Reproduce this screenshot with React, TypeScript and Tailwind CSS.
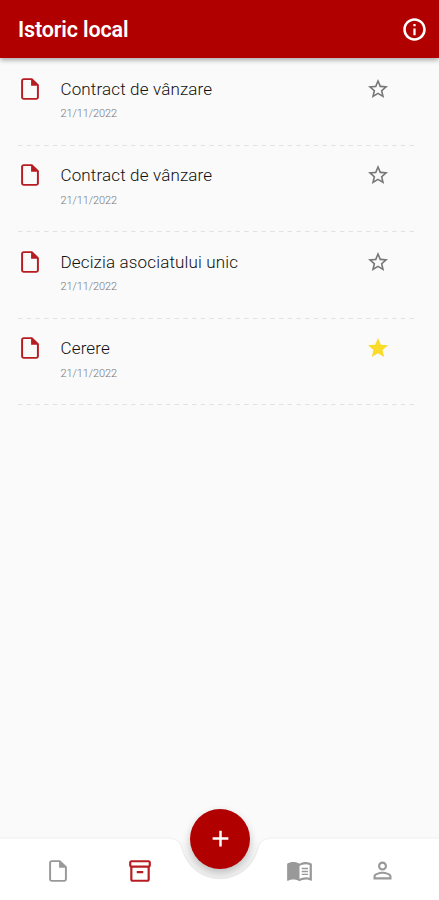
const paths = {
  info: "M11 7h2v2h-2zm0 4h2v6h-2zm1-9C6.48 2 2 6.48 2 12s4.48 10 10 10 10-4.48 10-10S17.52 2 12 2zm0 17.7c-4.25 0-7.7-3.45-7.7-7.7s3.45-7.7 7.7-7.7 7.7 3.45 7.7 7.7-3.45 7.7-7.7 7.7z",
  file: "M14 2H6.2C4.9 2 3.8 3.05 3.8 4.35V19.65C3.8 20.95 4.9 22 6.2 22H17.8C19.1 22 20.2 20.95 20.2 19.65V8L14 2zM6.2 20.2C5.85 20.2 5.6 19.95 5.6 19.6V4.4C5.6 4.05 5.85 3.8 6.2 3.8H13V9H18.4V19.6C18.4 19.95 18.15 20.2 17.8 20.2H6.2z",
  star: "M12 17.27 18.18 21l-1.64-7.03L22 9.24l-7.19-.61L12 2 9.19 8.63 2 9.24l5.46 4.73L5.82 21z",
  starOutline:
    "M22 9.24l-7.19-.62L12 2 9.19 8.63 2 9.24l5.46 4.73L5.82 21 12 17.27 18.18 21l-1.63-7.03L22 9.24zM12 15.4l-3.76 2.27 1-4.28-3.32-2.88 4.38-.38L12 6.1l1.71 4.04 4.38.38-3.32 2.88 1 4.28L12 15.4z",
  archive:
    "M20 2H4c-1 0-2 .9-2 2v3.01c0 .72.43 1.34 1 1.69V20c0 1.1 1.1 2 2 2h14c.9 0 2-.9 2-2V8.7c.57-.35 1-.97 1-1.69V4c0-1.1-1-2-2-2zm-1 18H5V9h14v11zm1-13H4V4h16v3zM9 12h6v2H9z",
  book: "M21 5c-1.11-.35-2.33-.5-3.5-.5-1.95 0-4.05.4-5.5 1.5-1.45-1.1-3.55-1.5-5.5-1.5S2.45 4.9 1 6v14.65c0 .25.25.5.5.5.1 0 .15-.05.25-.05C3.1 20.45 5.05 20 6.5 20c1.95 0 4.05.4 5.5 1.5 1.35-.85 3.8-1.5 5.5-1.5 1.65 0 3.35.3 4.75 1.05.1.05.15.05.25.05.25 0 .5-.25.5-.5V6c-.6-.45-1.25-.75-2-1zm0 13.5c-1.1-.35-2.3-.5-3.5-.5-1.7 0-4.15.65-5.5 1.5V8c1.35-.85 3.8-1.5 5.5-1.5 1.2 0 2.4.15 3.5.5v11.5zM14 9.6h5.6v1.3H14zM14 12.2h5.6v1.3H14zM14 14.8h5.6v1.3H14z",
  person:
    "M12 5.9c1.16 0 2.1.94 2.1 2.1s-.94 2.1-2.1 2.1S9.9 9.16 9.9 8s.94-2.1 2.1-2.1m0 9c2.97 0 6.1 1.46 6.1 2.1v1.1H5.9V17c0-.64 3.13-2.1 6.1-2.1M12 4C9.79 4 8 5.79 8 8s1.79 4 4 4 4-1.79 4-4-1.79-4-4-4zm0 9c-2.67 0-8 1.34-8 4v3h16v-3c0-2.66-5.33-4-8-4z",
  plus: "M19 13.1h-5.9v5.9h-2.2v-5.9H5v-2.2h5.9V5h2.2v5.9H19z",
};

interface IconProps {
  name: keyof typeof paths;
  className?: string;
}

function Icon({ name, className }: IconProps) {
  return (
    <svg viewBox="0 0 24 24" fill="currentColor" className={`shrink-0 ${className ?? ""}`}>
      <path d={paths[name]} />
    </svg>
  );
}

const documents = [
  { id: 1, title: "Contract de vânzare", date: "21/11/2022", starred: false },
  { id: 2, title: "Contract de vânzare", date: "21/11/2022", starred: false },
  { id: 3, title: "Decizia asociatului unic", date: "21/11/2022", starred: false },
  { id: 4, title: "Cerere", date: "21/11/2022", starred: true },
];

type Document = (typeof documents)[number];

function DocumentRow({ title, date, starred }: Document) {
  return (
    <li className="flex h-[86.5px] flex-col">
      <div className="flex flex-1 items-start pt-[15.5px]">
        <Icon name="file" className="mt-px -ml-px size-[26px] text-[#b71c22]" />
        <div className="ml-[17.5px] flex-1">
          <div className="text-[17px] leading-7 font-light tracking-[0.15px] text-[#111]">{title}</div>
          <div className="mt-[3.5px] text-[11px] leading-4 font-light tracking-[-0.1px] text-[#777]">{date}</div>
        </div>
        <button className="mt-0.5 mr-[26px]">
          <Icon
            name={starred ? "star" : "starOutline"}
            className={starred ? "size-6 text-[#fadb2a]" : "size-6 text-[#777]"}
          />
        </button>
      </div>
      <svg className="h-px w-full">
        <line x1="0" y1="0.5" x2="100%" y2="0.5" stroke="#e2e2e2" strokeDasharray="4.5 4.2" />
      </svg>
    </li>
  );
}

export default function App() {
  return (
    <div className="flex h-[900px] w-[439px] flex-col overflow-hidden bg-[#fafafa] font-['Roboto',sans-serif]">
      <header className="z-10 flex h-[58px] shrink-0 items-center justify-between bg-[#b00000] pr-[11px] pl-[18px] text-white shadow-[0_2px_5px_rgba(0,0,0,0.35)]">
        <h1 className="pt-0.5 text-[21.5px] font-semibold tracking-[-0.15px]">Istoric local</h1>
        <Icon name="info" className="size-[27px]" />
      </header>

      <main className="flex-1 pt-px pr-[23px] pl-[18px]">
        <ul>
          {documents.map((doc) => (
            <DocumentRow key={doc.id} {...doc} />
          ))}
        </ul>
      </main>

      <nav className="relative h-[62px] shrink-0">
        {/* Bar with the notch cut out for the add button */}
        <svg viewBox="0 0 439 62" className="absolute inset-0 h-full w-full overflow-visible">
          <defs>
            <linearGradient id="notch" x1="0" y1="0" x2="0" y2="1">
              <stop offset="0.5" stopColor="#fafafa" />
              <stop offset="0.75" stopColor="#f3f3f3" />
            </linearGradient>
          </defs>
          <circle cx="220" cy="0.5" r="41" fill="url(#notch)" />
          <path
            d="M0 0.5H166C176 0.5 180 4 182 12C187 29 202 41 220 41S253 29 258 12C260 4 264 0.5 274 0.5H439V62H0Z"
            fill="#fff"
            className="drop-shadow-[0_0_1px_rgba(0,0,0,0.1)]"
          />
        </svg>
        <div className="relative flex h-full items-center justify-between pt-[3px] pr-[43px] pl-[45px] text-[#999]">
          <Icon name="file" className="size-[26px]" />
          <Icon name="archive" className="size-[26px] text-[#b71c22]" />
          <Icon name="book" className="ml-[76px] size-[27px]" />
          <Icon name="person" className="size-[27px]" />
        </div>
        <button className="absolute top-[-29.5px] left-[190px] flex size-[60px] items-center justify-center rounded-full bg-[#b00000] text-white shadow-[0_4px_8px_rgba(0,0,0,0.22)]">
          <Icon name="plus" className="size-[27px]" />
        </button>
      </nav>
    </div>
  );
}
